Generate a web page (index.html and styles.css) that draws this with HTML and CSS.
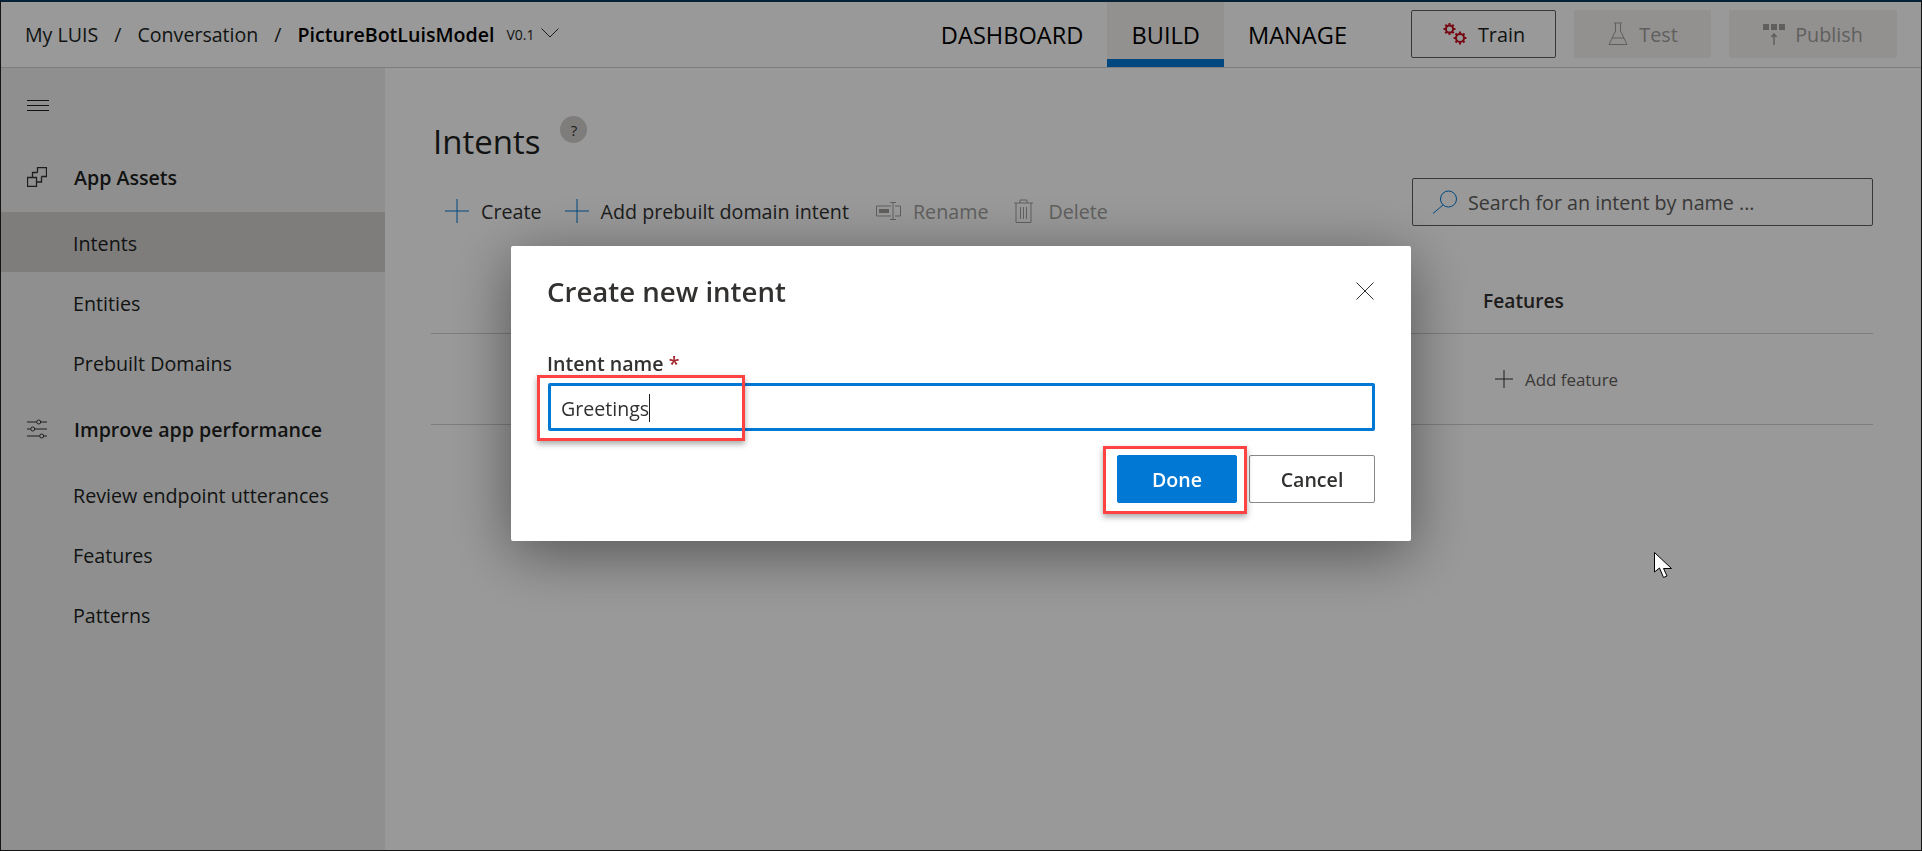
FILE: index.html
```html
<!DOCTYPE html>
<html lang="en">

<head>
  <meta charset="UTF-8">
  <title>Intents - PictureBotLuisModel</title>
  <link rel="stylesheet" href="styles.css">
</head>

<body>
  <div class="page">
    <header class="topbar">
      <nav class="crumbs">
        <span>My LUIS</span>
        <span class="crumb-sep">/</span>
        <span>Conversation</span>
        <span class="crumb-sep">/</span>
        <span class="crumb-app">PictureBotLuisModel</span>
        <span class="crumb-version">V0.1</span>
        <svg class="chevron" viewBox="0 0 18 10"><path d="M.5.5l8.500 8.500 8.500-8.500" /></svg>
      </nav>
      <nav class="tabs">
        <a class="tab">DASHBOARD</a>
        <a class="tab tab-active">BUILD</a>
        <a class="tab">MANAGE</a>
      </nav>
      <div class="actions">
        <button class="action action-train">
          <svg class="action-icon" viewBox="0 0 26 24">
            <g class="gear">
              <circle cx="7.500" cy="7" r="3.600" />
              <path d="M7.500 1v2.400M7.500 10.600V13M1.500 7h2.400M11.100 7h2.400M3.300 2.800L5 4.500M10 9.500l1.700 1.700M3.300 11.200L5 9.500M10 4.500l1.700-1.700" />
            </g>
            <g class="gear">
              <circle cx="18" cy="16" r="4" />
              <path d="M18 9.600v2.400M18 20v2.400M11.600 16H14M22 16h2.400M13.500 11.500l1.700 1.700M20.800 18.800l1.700 1.700M13.500 20.500l1.700-1.700M20.800 13.200l1.700-1.700" />
            </g>
          </svg>
          Train
        </button>
        <button class="action action-off action-test">
          <svg class="action-icon flask" viewBox="0 0 22 24"><path d="M7 1h8M8.500 1v8L2 22.500h18L13.500 9V1M5 16h12" /></svg>
          Test
        </button>
        <button class="action action-off action-publish">
          <svg class="action-icon publish" viewBox="0 0 22 24">
            <rect x="0" y="2" width="6" height="6" />
            <rect x="8" y="2" width="6" height="6" />
            <rect x="16" y="2" width="6" height="6" />
            <path class="publish-arrow" d="M11 23V12M8.500 15l2.500-3 2.500 3" />
          </svg>
          Publish
        </button>
      </div>
    </header>

    <div class="main">
      <aside class="sidebar">
        <svg class="burger" viewBox="0 0 22 11"><path d="M0 .5h22M0 5.500h22M0 10.500h22" /></svg>
        <div class="side-head side-head-first">
          <svg class="side-icon side-icon-assets" viewBox="0 0 20 20"><path d="M.5 10.500h9v9h-9zM5.500 10.500v-5h5M14.500 9.500v5.500H9.500M10.500 5.500v-5h9v9h-5" /></svg>
          App Assets
        </div>
        <a class="side-item side-item-on">Intents</a>
        <a class="side-item">Entities</a>
        <a class="side-item">Prebuilt Domains</a>
        <div class="side-head side-head-second">
          <svg class="side-icon" viewBox="0 0 20 20">
            <path d="M0 3h9.500M14 3h6M0 10h3.500M8 10h12M0 17h12.500M17 17h3" />
            <circle cx="11.700" cy="3" r="2" />
            <circle cx="5.700" cy="10" r="2" />
            <circle cx="14.700" cy="17" r="2" />
          </svg>
          Improve app performance
        </div>
        <a class="side-item">Review endpoint utterances</a>
        <a class="side-item">Features</a>
        <a class="side-item">Patterns</a>
      </aside>

      <main class="content">
        <div class="title-row">
          <h1 class="title">Intents</h1>
          <span class="help">?</span>
        </div>
        <div class="toolbar-row">
          <div class="toolbar">
            <a class="tool">
              <svg class="plus" viewBox="0 0 24 24"><path d="M12 0v24M0 12h24" /></svg>
              Create
            </a>
            <a class="tool tool-add">
              <svg class="plus" viewBox="0 0 24 24"><path d="M12 0v24M0 12h24" /></svg>
              Add prebuilt domain intent
            </a>
            <a class="tool tool-off tool-rename">
              <svg class="rename" viewBox="0 0 25 18">
                <path d="M15 4H.5v10H15M19 4h5.500v10H19M14 .5h6M14 17.500h6M17 .5v17" />
                <rect x="3" y="7" width="10" height="4" />
              </svg>
              Rename
            </a>
            <a class="tool tool-off tool-delete">
              <svg class="trash" viewBox="0 0 19 24">
                <path d="M0 4h19M6 4V1h7v3M2 4v19.500h15V4M6.500 8v12M9.500 8v12M12.500 8v12" />
              </svg>
              Delete
            </a>
          </div>
          <label class="search">
            <svg class="search-icon" viewBox="0 0 26 24">
              <circle cx="16.500" cy="9" r="8" />
              <path d="M11 15L1 23.500" />
            </svg>
            Search for an intent by name ...
          </label>
        </div>
        <div class="table-head">
          <span class="col-features">Features</span>
        </div>
        <div class="table-row">
          <a class="add-feature">
            <svg class="plus-small" viewBox="0 0 18 18"><path d="M9 0v18M0 9h18" /></svg>
            Add feature
          </a>
        </div>
      </main>
    </div>
  </div>

  <div class="overlay">
    <section class="dialog">
      <div class="dialog-head">
        <h2 class="dialog-title">Create new intent</h2>
        <svg class="close" viewBox="0 0 18 18"><path d="M.5.5l17 17M17.500.5l-17 17" /></svg>
      </div>
      <label class="field-label">Intent name <span class="req">*</span></label>
      <div class="field">Greetings<span class="caret"></span></div>
      <div class="dialog-actions">
        <button class="btn btn-primary">Done</button>
        <button class="btn">Cancel</button>
      </div>
      <div class="callout callout-field"></div>
      <div class="callout callout-done"></div>
    </section>
    <svg class="cursor" viewBox="0 0 18 27">
      <path d="M.5.500V20l5-4 4 9.500 3.500-1.500-3.500-7.500h8z" />
    </svg>
  </div>
</body>

</html>
```

FILE: styles.css
```css
* {
  box-sizing: border-box;
}

html,
body {
  margin: 0;
  height: 100%;
  overflow: hidden;
}

body {
  font-family: "Open Sans", "Noto Sans", sans-serif;
  color: #000;
  background: #fff;
}

svg {
  display: block;
  flex: none;
  fill: none;
  stroke: currentColor;
}

.page {
  display: flex;
  flex-direction: column;
  height: 100%;
  border: 1px solid #222;
  border-top: 2px solid #0b3a5c;
}

/* top bar */
.topbar {
  display: flex;
  align-items: stretch;
  height: 66px;
  padding-left: 24px;
  border-bottom: 1px solid #d2d0ce;
}

.crumbs {
  display: flex;
  align-items: center;
  font-size: 19.6px;
  color: #201f1e;
}

.crumb-sep {
  margin: 0 16px;
}

.crumb-app {
  font-weight: 600;
  color: #000;
}

.crumb-version {
  margin-left: 12px;
  font-size: 14px;
}

.chevron {
  width: 18px;
  height: 10px;
  margin-left: 7px;
  margin-bottom: 4px;
  color: #323130;
}

.tabs {
  display: flex;
  margin-left: auto;
  margin-right: 40px;
  font-size: 23.6px;
}

.tab {
  display: flex;
  align-items: center;
  padding: 8px 24px 0;
  border-bottom: 8px solid transparent;
  font-weight: 400;
}

.tab-active {
  background: #f3f2f1;
  border-bottom-color: #0078d4;
}

.actions {
  display: flex;
  gap: 18px;
  padding: 8px 24px 0 0;
}

.action {
  display: flex;
  align-items: center;
  justify-content: center;
  gap: 10px;
  height: 48px;
  padding: 0;
  border: 1px solid #605e5c;
  border-radius: 2px;
  background: #fff;
  font-family: inherit;
  font-size: 19.8px;
  font-weight: 500;
  color: #201f1e;
}

.action-train {
  width: 145px;
}

.action-test {
  width: 137px;
}

.action-publish {
  width: 168px;
}

.action-off {
  border-color: #f3f2f1;
  background: #f3f2f1;
  color: #a19f9d;
}

.action-icon {
  width: 26px;
  height: 24px;
}

.gear {
  color: #c50f1f;
  stroke-width: 2;
}

.flask {
  width: 22px;
}

.publish {
  width: 22px;
}

.publish rect {
  fill: currentColor;
  stroke: none;
}

.publish-arrow {
  stroke-width: 1.500;
}

/* sidebar */
.main {
  display: flex;
  flex: 1;
  min-height: 0;
}

.sidebar {
  display: flex;
  flex-direction: column;
  width: 384px;
  padding-top: 32px;
  background: #efefef;
}

.burger {
  width: 22px;
  height: 11px;
  margin-left: 26px;
  color: #201f1e;
}

.side-head {
  display: flex;
  align-items: center;
  gap: 27px;
  height: 72px;
  padding-left: 26px;
  font-size: 19.6px;
  font-weight: 600;
  color: #201f1e;
}

.side-head-first {
  height: 60px;
  margin-top: 37px;
  margin-bottom: 4px;
  padding-bottom: 2px;
}

.side-head-second {
  padding-top: 2px;
}

.side-icon {
  width: 20px;
  height: 20px;
  color: #323130;
}

.side-icon circle {
  fill: #efefef;
}

.side-icon-assets {
  stroke-width: 1.300;
}

.side-item {
  display: flex;
  align-items: center;
  height: 60px;
  padding: 2px 0 0 72px;
  font-size: 19.7px;
  color: #201f1e;
}

.side-item-on {
  background: #d2d0ce;
}

/* content */
.content {
  flex: 1;
  padding: 0 48px 0 46px;
}

.title-row {
  display: flex;
  align-items: flex-start;
  height: 119px;
  padding-top: 48px;
}

.title {
  margin: 1px 0 0 2px;
  font-size: 33px;
  font-weight: 400;
  line-height: 50px;
  color: #201f1e;
}

.help {
  display: flex;
  align-items: center;
  justify-content: center;
  width: 27px;
  height: 27px;
  margin-left: 20px;
  border-radius: 50%;
  background: #d2d0ce;
  font-size: 15px;
  color: #323130;
}

.toolbar-row {
  display: flex;
  align-items: flex-start;
  justify-content: space-between;
  height: 79px;
}

.toolbar {
  display: flex;
  gap: 25px;
  padding: 0 0 0 14px;
}

.tool {
  display: flex;
  align-items: center;
  gap: 12px;
  height: 48px;
  font-size: 19.7px;
  color: #323130;
}

.tool-add {
  margin-left: -2px;
}

.tool-rename {
  margin-left: 2px;
}

.tool-delete {
  margin-left: -1px;
}

.tool-off {
  color: #a19f9d;
}

.plus {
  width: 24px;
  height: 24px;
  color: #0078d4;
}

.rename {
  width: 25px;
  height: 18px;
}

.rename rect {
  fill: currentColor;
  stroke: none;
}

.trash {
  width: 19px;
  height: 24px;
  margin: 0 3px 0 2px;
}

.search {
  display: flex;
  align-items: center;
  gap: 10px;
  width: 461px;
  height: 48px;
  margin-top: -9px;
  padding-left: 19px;
  border: 1px solid #605e5c;
  border-radius: 2px;
  font-size: 19.7px;
  color: #605e5c;
}

.search-icon {
  width: 26px;
  height: 24px;
  color: #0078d4;
}

.table-head {
  display: flex;
  align-items: center;
  height: 68px;
  padding: 1px 0 0 1052px;
  border-bottom: 1px solid #d2d0ce;
  font-size: 19.2px;
  font-weight: 600;
  color: #323130;
}

.table-row {
  display: flex;
  align-items: center;
  height: 91px;
  padding-left: 1064px;
  border-bottom: 1px solid #d2d0ce;
}

.add-feature {
  display: flex;
  align-items: center;
  gap: 12px;
  font-size: 16.9px;
  color: #605e5c;
}

.plus-small {
  width: 18px;
  height: 18px;
  color: #323130;
}

/* dialog over the page */
.overlay {
  position: fixed;
  inset: 0;
  background: rgba(0, 0, 0, 0.4);
}

.dialog {
  position: absolute;
  left: 511px;
  top: 246px;
  display: flex;
  flex-direction: column;
  width: 900px;
  height: 295px;
  padding: 0 36px 0 37px;
  border-radius: 2px;
  background: #fff;
  box-shadow: 0 12px 60px rgba(0, 0, 0, 0.45);
  color: #323130;
}

.dialog-head {
  display: flex;
  align-items: center;
  justify-content: space-between;
  height: 90px;
}

.dialog-title {
  margin: 0 0 0 -1px;
  font-size: 27.6px;
  font-weight: 600;
}

.close {
  width: 18px;
  height: 18px;
  margin-right: 1px;
  color: #323130;
}

.field-label {
  height: 47px;
  margin-left: -1px;
  padding-top: 17px;
  font-size: 19.6px;
  font-weight: 600;
  line-height: 22px;
}

.req {
  color: #a4262c;
}

.field {
  display: flex;
  align-items: center;
  height: 48px;
  padding: 2px 0 0 10px;
  border: 3px solid #0078d4;
  border-radius: 2px;
  font-size: 19.6px;
}

.caret {
  width: 1px;
  height: 28px;
  background: #201f1e;
}

.dialog-actions {
  display: flex;
  justify-content: flex-end;
  gap: 12px;
  margin-top: 24px;
}

.btn {
  width: 126px;
  height: 48px;
  padding: 0;
  border: 1px solid #8a8886;
  border-radius: 2px;
  background: #fff;
  font-family: inherit;
  font-size: 19.6px;
  font-weight: 600;
  color: #323130;
}

.btn-primary {
  width: 120px;
  border-color: #0078d4;
  background: #0078d4;
  color: #fff;
}

.callout {
  position: absolute;
  border: 3px solid #ff4343;
  box-shadow: 0 3px 6px rgba(0, 0, 0, 0.35);
}

.callout-field {
  left: 26px;
  top: 129px;
  width: 208px;
  height: 66px;
}

.callout-done {
  left: 592px;
  top: 200px;
  width: 144px;
  height: 68px;
}

.cursor {
  position: absolute;
  left: 1654px;
  top: 552px;
  width: 18px;
  height: 27px;
  fill: #fff;
  stroke: #000;
}
```
